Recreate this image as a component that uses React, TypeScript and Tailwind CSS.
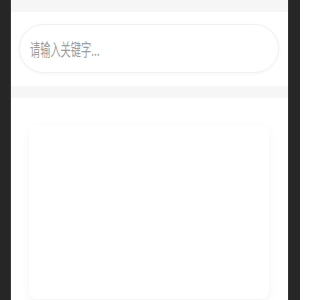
import React from "react";

export default function App() {
  return (
    <div className="flex h-[300px] w-[300px] overflow-hidden bg-[#262626] font-['Noto_Sans_CJK_SC','Noto_Sans',sans-serif]">
      <div className="w-[11px] shrink-0 border-r border-[#3a3a3a]" />
      <main className="flex w-[277px] shrink-0 flex-col bg-white">
        <div className="h-[12px] bg-[#f6f6f6]" />
        <section className="pt-[12px] pb-[13px] pl-[8px] pr-[9px]">
          <div className="flex h-[49px] items-center overflow-hidden rounded-full border border-[#f0f0f0] bg-white pl-[10px] shadow-[0_1px_4px_rgba(0,0,0,0.04)]">
            <input
              className="w-[170%] shrink-0 origin-left scale-x-[0.6] bg-transparent text-[17px] text-[#333] outline-none placeholder:text-[#9c9c9c]"
              placeholder="请输入关键字..."
            />
          </div>
        </section>
        <div className="h-[12px] bg-[#f6f6f6]" />
        <section className="flex-1 pt-[27px] pl-[18px] pr-[19px]">
          <div className="h-[174px] rounded-lg bg-white shadow-[0_3px_10px_rgba(0,0,0,0.05)]" />
        </section>
      </main>
      <div className="flex-1 border-l border-[#333]" />
    </div>
  );
}
